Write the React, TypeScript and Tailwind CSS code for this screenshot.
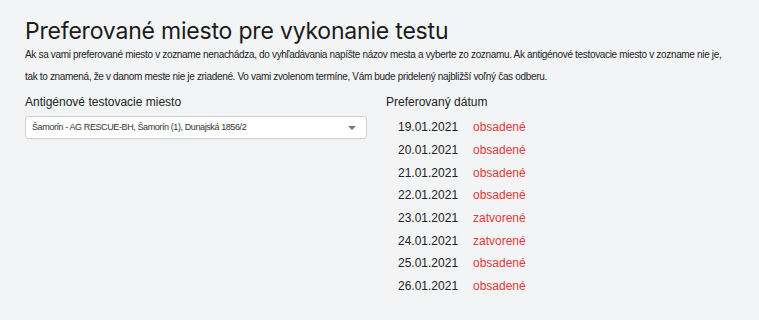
import React from "react";

const rows: [string, string][] = [
  ["19.01.2021", "obsadené"],
  ["20.01.2021", "obsadené"],
  ["21.01.2021", "obsadené"],
  ["22.01.2021", "obsadené"],
  ["23.01.2021", "zatvorené"],
  ["24.01.2021", "zatvorené"],
  ["25.01.2021", "obsadené"],
  ["26.01.2021", "obsadené"],
];

export default function App() {
  return (
    <div className="w-[759px] h-[320px] bg-[#f3f4f6] text-[#222] pl-[25px] pr-[20px] pt-[16px] font-['Liberation_Sans',Arial,sans-serif]">
      <h1 className="text-[23px] leading-[30px] text-[#1b1b1b] font-['Inter',sans-serif] tracking-[-0.2px]">
        Preferované miesto pre vykonanie testu
      </h1>
      <p className="-mt-[2px] mr-[8px] text-[10px] leading-[22px] tracking-[-0.33px] text-[#222]">
        Ak sa vami preferované miesto v zozname nenachádza, do vyhľadávania napíšte názov mesta a vyberte zo zoznamu. Ak antigénové testovacie miesto v zozname nie je, tak to znamená, že v danom meste nie je zriadené. Vo vami zvolenom termíne, Vám bude pridelený najbližší voľný čas odberu.
      </p>
      <div className="mt-[5px] grid grid-cols-[361px_1fr]">
        <div>
          <div className="text-[12px] leading-[18px] text-[#222]">Antigénové testovacie miesto</div>
          <div className="mt-[5px] w-[342px] h-[23px] bg-white border border-[#d0d0d0] rounded-[3px] flex items-center justify-between pl-[6px] pr-[10px] shadow-[0_1px_1px_rgba(0,0,0,0.04)]">
            <span className="text-[9px] tracking-[-0.4px] text-[#333]">Šamorín - AG RESCUE-BH, Šamorín (1), Dunajská 1856/2</span>
            <span className="w-0 h-0 border-l-[4px] border-r-[4px] border-t-[4px] border-l-transparent border-r-transparent border-t-[#777]" />
          </div>
        </div>
        <div>
          <div className="text-[12px] leading-[18px] text-[#222]">Preferovaný dátum</div>
          <div className="mt-[5px] pl-[12px] flex flex-col">
            {rows.map(([d, s]) => (
              <div key={d} className="flex h-[22.7px] items-center text-[12px]">
                <span className="w-[75px] text-[#222]">{d}</span>
                <span className="text-[#e53935]">{s}</span>
              </div>
            ))}
          </div>
        </div>
      </div>
    </div>
  );
}
